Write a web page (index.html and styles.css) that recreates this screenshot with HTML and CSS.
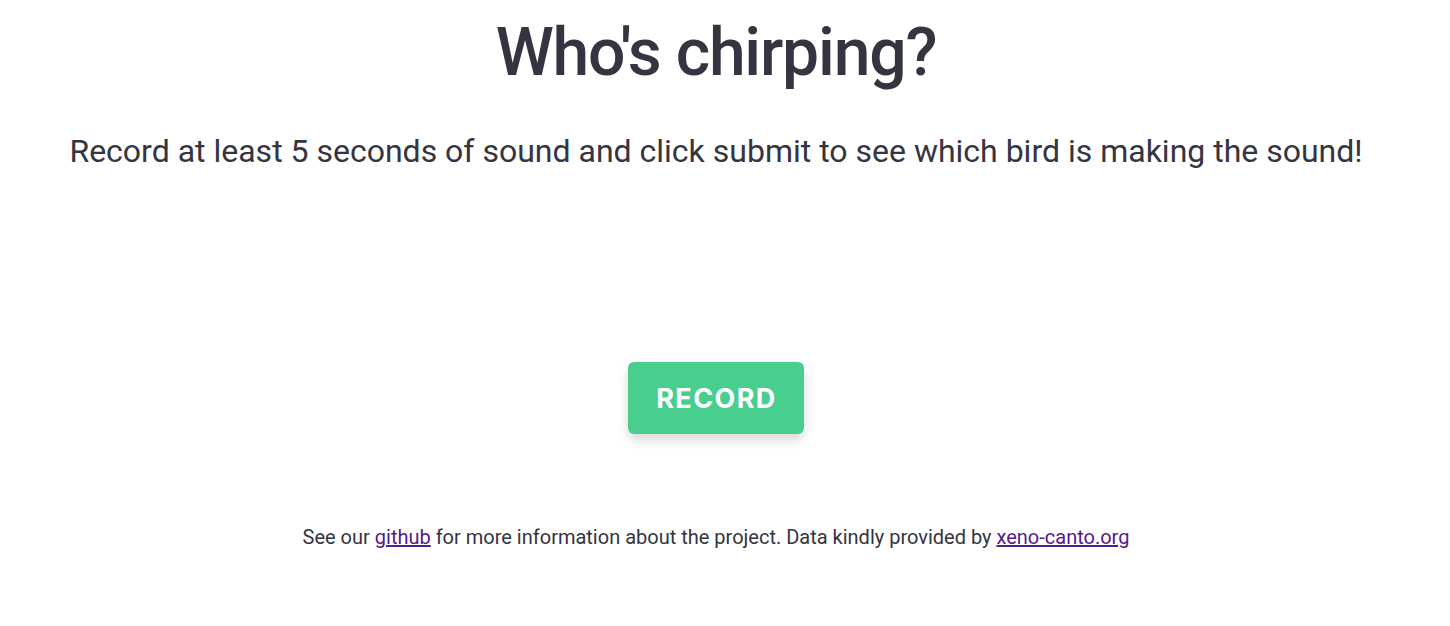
FILE: index.html
```html
<!DOCTYPE html>
<html>
<head>
<meta charset="utf-8">
<link rel="stylesheet" href="styles.css">
</head>
<body>
<main class="page">
  <h1 class="title">Who's chirping?</h1>
  <p class="lead">Record at least 5 seconds of sound and click submit to see which bird is making the sound!</p>
  <div class="actions">
    <button class="record-btn">RECORD</button>
  </div>
  <p class="footer">See our <a href="#">github</a> for more information about the project. Data kindly provided by <a href="#">xeno-canto.org</a></p>
</main>
</body>
</html>
```

FILE: styles.css
```css
html, body {
  margin: 0;
  padding: 0;
  background: #ffffff;
}
body {
  font-family: Roboto, "Liberation Sans", sans-serif;
  color: #353441;
}
.page {
  display: flex;
  flex-direction: column;
  align-items: center;
  text-align: center;
  padding-right: 18px;
}
.title {
  margin: 8px 0 0;
  font-size: 66px;
  font-weight: 500;
  letter-spacing: -1.2px;
  line-height: 90px;
}
.lead {
  margin: 33px 0 0;
  font-size: 32px;
  line-height: 40px;
}
.actions {
  margin-top: 191px;
}
.record-btn {
  width: 176px;
  height: 72px;
  padding: 0 0 0 1px;
  border: none;
  border-radius: 6px;
  background: #48cf8f;
  color: #ffffff;
  font-family: Inter, "Liberation Sans", sans-serif;
  font-weight: 700;
  font-size: 27px;
  letter-spacing: 1.4px;
  box-shadow: 0 6px 12px rgba(0, 0, 0, 0.15);
}
.footer {
  margin: 91px 0 0;
  font-size: 20px;
  line-height: 24px;
}
.footer a {
  color: #551a8b;
}
```
